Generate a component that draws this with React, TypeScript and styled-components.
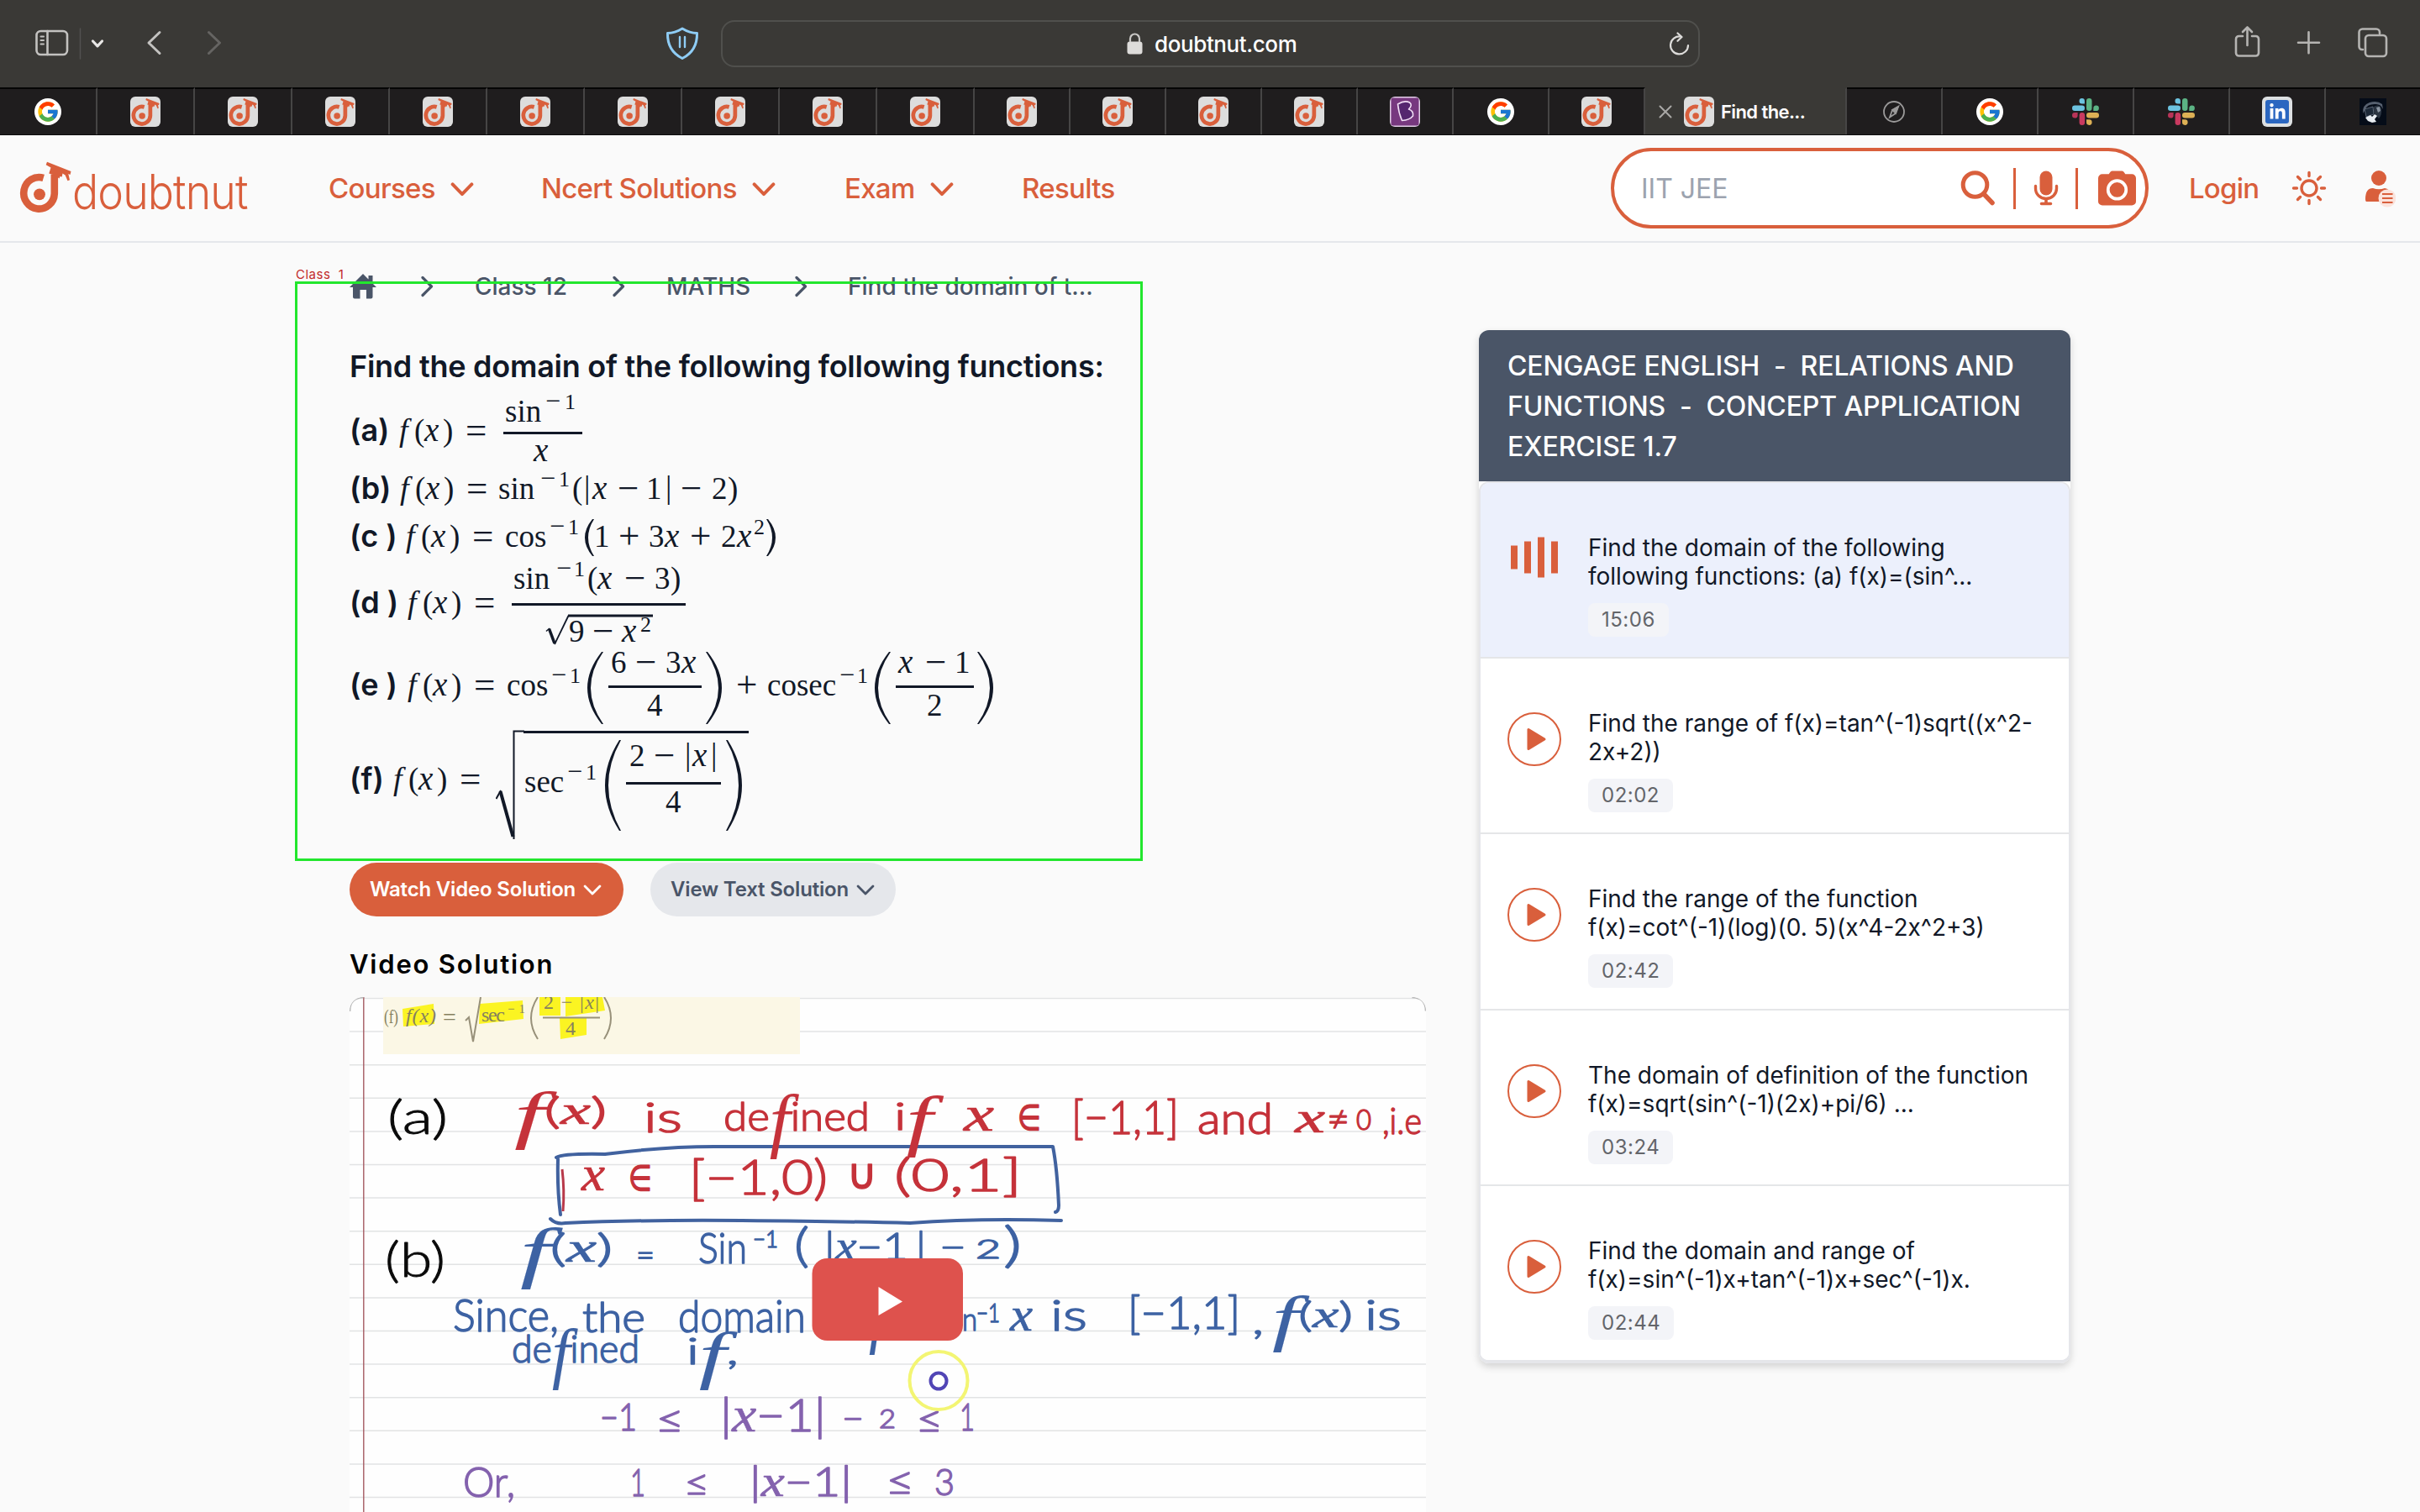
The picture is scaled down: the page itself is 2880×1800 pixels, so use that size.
import React from "react";
import styled, { createGlobalStyle, css } from "styled-components";
import { FcGoogle } from "react-icons/fc";
import { FaLinkedinIn } from "react-icons/fa";

const ORANGE = "#d95f3c";
const INK = "#111827";
const SLATE = "#4a5568";

const GlobalStyle = createGlobalStyle`
  * { box-sizing: border-box; }
  body { margin: 0; background: #fafafa; overflow: hidden; }
  svg { display: block; flex: none; }
`;

const Page = styled.div`
  width: 2880px;
  height: 1800px;
  overflow: hidden;
  display: flex;
  flex-direction: column;
  background: #fafafa;
  color: ${INK};
  font-family: Inter, "Liberation Sans", sans-serif;
`;

/* ---------- browser chrome ---------- */

const Toolbar = styled.div`
  flex: none;
  height: 104px;
  display: flex;
  align-items: flex-start;
  background: #3a3936;
`;
const Controls = styled.div`
  width: 858px;
  height: 104px;
`;
const UrlBox = styled.div`
  width: 1165px;
  height: 56px;
  margin-top: 24px;
  padding: 0 10px 0 481px;
  border: 2px solid #50504d;
  border-radius: 16px;
  display: flex;
  align-items: center;
  color: #fff;
`;
const UrlText = styled.span`
  flex: 1;
  margin-left: 14px;
  padding-top: 1px;
  font-size: 26px;
  font-weight: 500;
  letter-spacing: -0.4px;
`;
const TabStrip = styled.div`
  flex: none;
  height: 57px;
  display: flex;
  background: #1f1d1e;
  border-bottom: 2px solid #0c0c0c;
`;
const Tab = styled.div<{ $w: number; $active?: boolean }>`
  width: ${(p) => p.$w}px;
  height: 56px;
  display: flex;
  align-items: center;
  justify-content: ${(p) => (p.$active ? "flex-start" : "center")};
  padding-left: ${(p) => (p.$active ? 16 : 0)}px;
  border-right: 2px solid #464545;
  border-top: 2px solid ${(p) => (p.$active ? "#3a3936" : "#050505")};
  background: ${(p) => (p.$active ? "#3a3936" : "#1f1d1e")};
  &:last-child { border-right: 0; }
`;
const TabTitle = styled.span`
  margin-left: 8px;
  color: #fff;
  font-size: 22px;
  font-weight: 600;
  letter-spacing: -0.6px;
`;
const Favicon = styled.div<{ $bg: string; $round?: boolean }>`
  width: ${(p) => (p.$round ? 32 : 36)}px;
  height: ${(p) => (p.$round ? 32 : 36)}px;
  border-radius: ${(p) => (p.$round ? "50%" : "6px")};
  background: ${(p) => p.$bg};
  display: flex;
  align-items: center;
  justify-content: center;
`;
const BlueTile = styled.div`
  width: 28px;
  height: 28px;
  border-radius: 3px;
  display: flex;
  align-items: center;
  justify-content: center;
  background: #2a66c0;
  color: #fff;
`;

const MarkShape = () => (
  <g>
    <path d="M51.700 211.800A18.300 18.800 0 1 0 64.800 230.500V207.500" fill="none" stroke={ORANGE} strokeWidth="8.600" />
    <circle cx="47" cy="231.300" r="6.900" fill={ORANGE} />
    <path
      d="M56 192.700 84.500 204 83.500 208 81.300 207 83 214.300 80.500 215.300 77.600 208.500 74.500 206.500 73.700 210.500 71.500 210 70.500 212.500 66 209 58.300 206.500 60.500 199.500 54.700 196.300Z"
      fill={ORANGE}
    />
  </g>
);

const DoubtnutIcon = () => (
  <Favicon $bg="#dddddd">
    <svg width="35" height="35" viewBox="23 191 64 64">
      <MarkShape />
    </svg>
  </Favicon>
);
const GoogleIcon = () => (
  <Favicon $bg="#fff" $round>
    <FcGoogle size={28} />
  </Favicon>
);
const ByjusIcon = () => (
  <Favicon $bg="#e3cfe8">
    <svg width="34" height="34" viewBox="0 0 34 34">
      <rect x="0.500" y="0.500" width="33" height="33" rx="2" fill="#77387f" />
      <path
        d="M8.500 8q8-5 14-2 4 3-1 8 6 2 5 8-4 5-13 5.500-4-9-5-19.500z"
        fill="#55266f"
        stroke="#f1dff5"
        strokeWidth="1.600"
        strokeLinejoin="round"
      />
    </svg>
  </Favicon>
);
const SlackIcon = () => (
  <svg width="32" height="32" viewBox="0 0 32 32">
    <path d="M11.700 0a3.200 3.200 0 0 1 3.200 3.200v3.200h-3.200a3.200 3.200 0 0 1 0-6.400z" fill="#6cc3e0" />
    <rect x="0" y="8.500" width="15" height="6.500" rx="3.200" fill="#6cc3e0" />
    <rect x="17" y="0" width="6.500" height="15" rx="3.200" fill="#5bb384" />
    <path d="M25.300 15V11.800a3.300 3.300 0 1 1 3.300 3.200z" fill="#5bb384" />
    <rect x="17" y="17" width="15" height="6.500" rx="3.200" fill="#ddb055" />
    <path d="M17 25.300h3.200a3.300 3.300 0 1 1-3.200 3.300z" fill="#ddb055" />
    <rect x="8.600" y="17" width="6.500" height="15" rx="3.200" fill="#c93a60" />
    <path d="M6.600 17v3.200a3.300 3.300 0 1 1-3.300-3.200z" fill="#b93458" />
  </svg>
);
const CompassIcon = () => (
  <svg width="26" height="26" viewBox="0 0 26 26" fill="none" stroke="#9b9a9a" strokeWidth="1.800">
    <circle cx="13" cy="13" r="12" />
    <path d="M18 7 15 15l-7 4.500L11 11z" />
    <path d="M18 7 15 15l-4-4z" fill="#9b9a9a" />
  </svg>
);
const LinkedInIcon = () => (
  <Favicon $bg="#dde0e2">
    <BlueTile>
      <FaLinkedinIn size={21} />
    </BlueTile>
  </Favicon>
);
const DarkPictureIcon = () => (
  <svg width="32" height="32" viewBox="0 0 32 32">
    <rect width="32" height="32" fill="#050c18" />
    <path d="M4 18Q3 8 12 5q9-3 15 2l1 6q-3-7-10-6-9 0-11 6z" fill="#56606f" />
    <path d="M6 13l10-3 1 9-9 3z" fill="#1d2938" stroke="#6b7685" strokeWidth="0.800" />
    <path d="M17 10q6-4 9 2 1 8-3 12l-3-3-3-4z" fill="#2a3441" />
    <path d="M20 11l4-1 1 5-3 2z" fill="#8c96a2" />
    <path d="M7 23l6-3 2 2 3-3 3 2-3 4 2 3-5 1-5-2z" fill="#e8edf2" />
  </svg>
);

type TabDef = [number, React.ReactNode];
const repeat = (n: number, w: number): TabDef[] => Array.from({ length: n }, () => [w, <DoubtnutIcon />]);
const tabs: TabDef[] = [
  [116, <GoogleIcon />],
  ...repeat(9, 116),
  ...repeat(4, 114),
  [114, <ByjusIcon />],
  [114, <GoogleIcon />],
  [114, <DoubtnutIcon />],
];
const tabsAfter: TabDef[] = [
  [114, <CompassIcon />],
  [114, <GoogleIcon />],
  [114, <SlackIcon />],
  [114, <SlackIcon />],
  [114, <LinkedInIcon />],
  [112, <DarkPictureIcon />],
];

const Browser = () => (
  <>
    <Toolbar>
      <Controls>
        <svg width="858" height="104" viewBox="0 0 858 104" fill="none" strokeLinecap="round" strokeLinejoin="round">
          <g stroke="#c3c2c0" strokeWidth="2.600">
            <rect x="43.500" y="37" width="36.500" height="28" rx="5" />
            <path d="M56.500 37v28" />
            <path d="M48.500 43.500h3.500M48.500 48h3.500M48.500 52.500h3.500" strokeWidth="2" />
            <path d="M190 38.500 177 51l13 12.500" strokeWidth="3" />
          </g>
          <path d="M95.500 34v36" stroke="#525150" strokeWidth="1.500" />
          <path d="m110.500 49 5.500 5.800 5.500-5.800" stroke="#e8e7e6" strokeWidth="3.200" />
          <path d="M248.500 38.500 261.500 51l-13 12.500" stroke="#656462" strokeWidth="3" />
          <path
            d="M812 34q9 5.500 17.500 5.500.500 21-17.500 30-18-9-17.500-30 8.500 0 17.500-5.500z"
            stroke="#8fcdf5"
            strokeWidth="3"
          />
          <path d="M809 44v12M815 44v12" stroke="#8fcdf5" strokeWidth="2.400" />
        </svg>
      </Controls>
      <UrlBox>
        <svg width="19" height="26" viewBox="0 0 19 26">
          <rect x="0.500" y="10.500" width="18" height="15" rx="3" fill="#dddcda" />
          <path d="M4 11V7a5.500 5.500 0 0 1 11 0v4" fill="none" stroke="#c9c8c6" strokeWidth="2.200" />
        </svg>
        <UrlText>doubtnut.com</UrlText>
        <svg width="25" height="28" viewBox="0 0 25 28" fill="none" stroke="#dddcda" strokeWidth="2.200" strokeLinecap="round" strokeLinejoin="round">
          <path d="M14 5.500A10.500 10.500 0 1 0 23 16" />
          <path d="M10.500 1.500 15.500 6l-5 4.800" />
        </svg>
      </UrlBox>
      <svg width="857" height="104" viewBox="2023 0 857 104" fill="none" stroke="#b5b4b2" strokeWidth="2.600" strokeLinecap="round" strokeLinejoin="round">
        <path d="M2669 43h-4.500a3.500 3.500 0 0 0-3.500 3.500V63a3.500 3.500 0 0 0 3.500 3.500h20a3.500 3.500 0 0 0 3.500-3.500V46.500a3.500 3.500 0 0 0-3.500-3.500H2680M2674.500 54V32.500M2669 38l5.500-5.500 5.500 5.500" />
        <path d="M2735 50.700h25M2747.500 38.200v25" />
        <path d="M2812 59h-1a3.500 3.500 0 0 1-3.500-3.500v-17a4 4 0 0 1 4-4h16.500a4 4 0 0 1 4 4v1.500" />
        <rect x="2815" y="42" width="25" height="25" rx="4" />
      </svg>
    </Toolbar>
    <TabStrip>
      {tabs.map(([w, icon], i) => (
        <Tab key={i} $w={w}>{icon}</Tab>
      ))}
      <Tab $w={240} $active>
        <svg width="16" height="16" viewBox="0 0 16 16" stroke="#a9a8a6" strokeWidth="2" strokeLinecap="round" style={{ marginRight: 14 }}>
          <path d="M1.500 1.500l13 13M14.500 1.500l-13 13" />
        </svg>
        <DoubtnutIcon />
        <TabTitle>Find the...</TabTitle>
      </Tab>
      {tabsAfter.map(([w, icon], i) => (
        <Tab key={i} $w={w}>{icon}</Tab>
      ))}
    </TabStrip>
  </>
);

/* ---------- site header ---------- */

const Header = styled.header`
  flex: none;
  height: 128px;
  display: flex;
  align-items: center;
  border-bottom: 2px solid #e5e7eb;
  color: ${ORANGE};
`;
const Logo = styled.div`
  width: 391px;
  height: 126px;
  display: flex;
  padding-left: 22px;
`;
const LogoText = styled.span`
  margin: 33px 0 0 -2px;
  height: 60px;
  line-height: 69px;
  font-size: 57px;
  font-weight: 300;
  letter-spacing: -1px;
  transform: scaleX(0.91);
  transform-origin: 0 0;
`;
const NavItem = styled.div<{ $w: number }>`
  width: ${(p) => p.$w}px;
  display: flex;
  align-items: center;
  gap: 18px;
  font-size: 33px;
  font-weight: 500;
  letter-spacing: -0.7px;
  white-space: nowrap;
`;
const SearchBox = styled.div`
  width: 640px;
  height: 96px;
  border: 4px solid ${ORANGE};
  border-radius: 48px;
  background: #fff;
  display: flex;
  align-items: center;
  padding-left: 32px;
`;
const Placeholder = styled.span`
  width: 380px;
  color: #9ca3af;
  font-size: 32px;
`;
const Divider = styled.span<{ $l: number; $r: number }>`
  width: 3px;
  height: 49px;
  margin: 0 ${(p) => p.$r}px 0 ${(p) => p.$l}px;
  background: ${ORANGE};
`;
const Login = styled.span`
  width: 122px;
  margin-left: 48px;
  font-size: 33px;
  font-weight: 500;
  letter-spacing: -0.8px;
`;

const Chevron = ({ w = 28, sw = 4 }: { w?: number; sw?: number }) => (
  <svg width={w} height={w * 0.6} viewBox="0 0 28 17" fill="none" stroke="currentColor" strokeWidth={sw} strokeLinecap="round" strokeLinejoin="round" style={{ marginTop: 3 }}>
    <path d="M2.500 2.500 14 14.200 25.500 2.500" />
  </svg>
);

const SiteHeader = () => (
  <Header>
    <Logo>
      <svg width="66" height="126" viewBox="22 161 66 126">
        <MarkShape />
      </svg>
      <LogoText>doubtnut</LogoText>
    </Logo>
    <NavItem $w={253}>Courses <Chevron /></NavItem>
    <NavItem $w={361}>Ncert Solutions <Chevron /></NavItem>
    <NavItem $w={211}>Exam <Chevron /></NavItem>
    <NavItem $w={701}>Results</NavItem>
    <SearchBox>
      <Placeholder>IIT JEE</Placeholder>
      <svg width="42" height="42" viewBox="0 0 42 42" fill="none" stroke={ORANGE} strokeWidth="5" strokeLinecap="round">
        <circle cx="17.500" cy="17" r="14.300" />
        <path d="m28 28 10 10.500" strokeWidth="5.500" />
      </svg>
      <Divider $l={21} $r={21} />
      <svg width="30" height="42" viewBox="0 0 30 42" fill="none" stroke={ORANGE} strokeLinecap="round">
        <rect x="7.500" y="0.500" width="15" height="29" rx="7.500" fill={ORANGE} stroke="none" />
        <path d="M2.500 18.500v3a12.500 12 0 0 0 25 0v-3" strokeWidth="3.400" />
        <path d="M15 34v5M9.500 39.500h11" strokeWidth="3.600" />
      </svg>
      <Divider $l={20} $r={24} />
      <svg width="45" height="42" viewBox="0 0 46 42">
        <path d="M5 4h8q2-4 4-4h12q2 0 4 4h8a5 5 0 0 1 5 5v28a5 5 0 0 1-5 5H5a5 5 0 0 1-5-5V9a5 5 0 0 1 5-5z" fill={ORANGE} />
        <circle cx="23" cy="23" r="11" fill={ORANGE} stroke="#fff" strokeWidth="3.800" />
      </svg>
    </SearchBox>
    <Login>Login</Login>
    <svg width="42" height="42" viewBox="0 0 42 42" fill="none" stroke={ORANGE} strokeWidth="3.400" strokeLinecap="round">
      <circle cx="21" cy="21" r="9" />
      <path d="M21 2.500v4M21 35.500v4M2.500 21h4M35.500 21h4M7.500 7.500l3 3M31.500 31.500l3 3M7.500 34.500l3-3M31.500 10.500l3-3" />
    </svg>
    <svg width="36" height="46" viewBox="0 0 36 46" style={{ marginLeft: 46, marginTop: 2 }}>
      <circle cx="16" cy="10" r="9" fill={ORANGE} />
      <path d="M1 38q-1 0-1-3 0-13 9-13 7 2.500 14 0 6 1 7 7v9z" fill={ORANGE} />
      <circle cx="26" cy="34" r="10.500" fill="#fbe3dc" />
      <path d="M20 29h12.500M20 34h12.500M20 39h12.500" stroke={ORANGE} strokeWidth="2" />
    </svg>
  </Header>
);

/* ---------- main column ---------- */

const Main = styled.main`
  flex: 1;
  display: flex;
  align-items: flex-start;
  padding-left: 416px;
`;
const Column = styled.section`
  position: relative;
  width: 1281px;
  height: 1511px;
  margin-right: 63px;
`;
const Crumbs = styled.nav`
  height: 115px;
  padding-top: 32px;
  display: flex;
  align-items: flex-start;
  color: ${SLATE};
  font-size: 28px;
  font-weight: 500;
  line-height: 40px;
  white-space: nowrap;
`;
const Crumb = styled.span<{ $w: number }>`
  width: ${(p) => p.$w}px;
`;
const CrumbIcon = styled.span<{ $w: number }>`
  width: ${(p) => p.$w}px;
  height: 40px;
  display: flex;
  align-items: center;
`;
const Annotation = styled.div`
  position: absolute;
  left: -65px;
  top: 46px;
  width: 1009px;
  height: 690px;
  border: 3px solid #22e62d;
`;
const AnnotationLabel = styled.span`
  position: absolute;
  left: -64px;
  top: 28px;
  color: #c22a2a;
  font-size: 15px;
  line-height: 20px;
  letter-spacing: 0.5px;
  white-space: pre;
`;
const Question = styled.h1`
  margin: 0;
  height: 60px;
  line-height: 64px;
  font-size: 36px;
  font-weight: 600;
  letter-spacing: -0.25px;
  white-space: nowrap;
`;
const Row = styled.div<{ $h: number }>`
  display: flex;
  align-items: flex-start;
  height: ${(p) => p.$h}px;
`;

type Kind = "h" | "f" | "i" | "r" | "o" | "s" | "so" | "bar";
const kinds: Record<Kind, ReturnType<typeof css>> = {
  h: css`font: 600 36px/44px Inter, sans-serif;`,
  f: css`font: italic 38px/42px "Liberation Serif", serif;`,
  i: css`font: italic 39px/42px "Liberation Serif", serif;`,
  r: css`font: 37px/42px "Liberation Serif", serif;`,
  o: css`font: 45px/50px "Liberation Serif", serif;`,
  s: css`font: 26px/28px "Liberation Serif", serif;`,
  so: css`font: 32px/36px "Liberation Serif", serif;`,
  bar: css`font: 37px/42px "Liberation Serif", serif;`,
};
const ascent: Record<Kind, number> = { h: 35, f: 34, i: 34, r: 33, o: 38, s: 37, so: 43, bar: 34 };

const Tok = styled.span<{ $k: Kind; $w: number; $b: number }>`
  ${(p) => kinds[p.$k]}
  flex: none;
  width: ${(p) => p.$w}px;
  margin-top: ${(p) => p.$b - ascent[p.$k]}px;
  white-space: pre;
`;
const FracBox = styled.div<{ $w: number }>`
  flex: none;
  width: ${(p) => p.$w}px;
  display: flex;
  flex-direction: column;
`;
const FracBar = styled.div`
  height: 3px;
  background: ${INK};
`;
const Part = styled.div<{ $h: number; $l: number }>`
  display: flex;
  align-items: flex-start;
  flex: none;
  height: ${(p) => p.$h}px;
  padding-left: ${(p) => p.$l}px;
`;

type T = [Kind, string, number];
const Line = ({ b, t }: { b: number; t: T[] }) => (
  <>
    {t.map(([k, s, w], i) => (
      <Tok key={i} $k={k} $w={w} $b={b}>{s}</Tok>
    ))}
  </>
);
const fx = (label: string, w: number, eq: number): T[] => [
  ["h", label, w],
  ["f", "f", 18],
  ["r", "(", 12],
  ["i", "x", 22],
  ["r", ")", 27],
  ["o", "=", eq],
];
type FracProps = { w: number; num: T[]; den: React.ReactNode; nh: number; nb: number; nl: number; dh: number; dl: number };
const Frac = (p: FracProps) => (
  <FracBox $w={p.w}>
    <Part $h={p.nh} $l={p.nl}><Line b={p.nb} t={p.num} /></Part>
    <FracBar />
    <Part $h={p.dh} $l={p.dl}>{p.den}</Part>
  </FracBox>
);

const Delim = ({ w, h, top, x, span, right }: { w: number; h: number; top: number; x: number; span: number; right?: boolean }) => (
  <svg width={w} height={h} viewBox={`0 0 ${w} ${h}`} fill={INK} style={{ marginTop: top }}>
    <path
      d={
        right
          ? `M${x} 0Q${x + span * 2 - 6} ${h / 2} ${x} ${h}h2Q${x + span * 2} ${h / 2} ${x + 2} 0z`
          : `M${x + span} 0Q${x - span + 6} ${h / 2} ${x + span} ${h}h-2Q${x - span} ${h / 2} ${x + span - 2} 0z`
      }
    />
  </svg>
);

const Formulas = () => (
  <>
    <Row $h={94}>
      <Line b={61} t={fx("(a)", 59, 45)} />
      <Frac
        w={94} nh={50} nb={38} nl={2} dh={41} dl={36}
        num={[["r", "sin", 48], ["so", "−", 23], ["s", "1", 13]]}
        den={<Line b={32} t={[["i", "x", 20]]} />}
      />
    </Row>
    <Row $h={56}>
      <Line
        b={36}
        t={[
          ...fx("(b)", 60, 38), ["r", "sin", 50], ["so", "−", 22], ["s", "1", 16], ["r", "(", 14], ["bar", "|", 10],
          ["i", "x", 30], ["o", "−", 34], ["r", "1", 23], ["bar", "|", 18], ["o", "−", 37], ["r", "2", 19], ["r", ")", 14],
        ]}
      />
    </Row>
    <Row $h={56}>
      <Line b={37} t={[...fx("(c )", 67, 39), ["r", "cos", 53], ["so", "−", 22], ["s", "1", 20]]} />
      <Delim w={11} h={44} top={4} x={1} span={10} />
      <Line b={37} t={[["r", "1", 29], ["o", "+", 36], ["r", "3", 19], ["i", "x", 30], ["o", "+", 37], ["r", "2", 19], ["i", "x", 20], ["s", "2", 13]]} />
      <Delim w={14} h={44} top={4} x={2} span={10} right />
    </Row>
    <Row $h={104}>
      <Line b={60} t={fx("(d )", 69, 45)} />
      <Frac
        w={207} nh={48} nb={31} nl={2} dh={50} dl={40}
        num={[["r", "sin", 51], ["so", "−", 21], ["s", "1", 16], ["r", "(", 12], ["i", "x", 32], ["o", "−", 36], ["r", "3", 19], ["r", ")", 12]]}
        den={
          <>
            <svg width="128" height="40" viewBox="0 0 128 40" fill="none" stroke={INK} style={{ marginTop: 9, marginRight: -100 }}>
              <path d="M1 21.500 5 18" strokeWidth="1.500" />
              <path d="M4.500 18.500 11 36" strokeWidth="3.500" />
              <path d="M11 37 27.500 3" strokeWidth="1.800" />
              <path d="M27 3h101" strokeWidth="3" />
            </svg>
            <Line b={43} t={[["r", "9", 28], ["o", "−", 35], ["i", "x", 22]]} />
            <Line b={46} t={[["s", "2", 15]]} />
          </>
        }
      />
    </Row>
    <Row $h={92}>
      <Line b={54} t={[...fx("(e )", 69, 39), ["r", "cos", 53], ["so", "−", 22], ["s", "1", 19]]} />
      <Delim w={27} h={86} top={2} x={3} span={18} />
      <Frac
        w={111} nh={42} nb={27} nl={3} dh={47} dl={46}
        num={[["r", "6", 29], ["o", "−", 36], ["r", "3", 19], ["i", "x", 20]]}
        den={<Line b={33} t={[["r", "4", 20]]} />}
      />
      <Delim w={41} h={86} top={2} x={5} span={18} right />
      <Line b={54} t={[["o", "+", 37], ["r", "cosec", 86], ["so", "−", 21], ["s", "1", 18]]} />
      <Delim w={28} h={86} top={2} x={4} span={18} />
      <Frac
        w={93} nh={42} nb={27} nl={3} dh={47} dl={37}
        num={[["i", "x", 32], ["o", "−", 35], ["r", "1", 20]]}
        den={<Line b={33} t={[["r", "2", 20]]} />}
      />
      <Delim w={30} h={86} top={2} x={4} span={18} right />
    </Row>
    <Row $h={161}>
      <Line b={74} t={fx("(f)", 52, 43)} />
      <svg width="301" height="134" viewBox="0 0 301 134" fill="none" stroke={INK} style={{ marginRight: -267 }}>
        <path d="M.500 85 6 75" strokeWidth="2" />
        <path d="M5.500 76 20.500 130" strokeWidth="4" />
        <path d="M21.500 133V4.500H34" strokeWidth="2" />
        <path d="M33 5.500h268" strokeWidth="3" />
      </svg>
      <Line b={77} t={[["r", "sec", 51], ["so", "−", 22], ["s", "1", 21]]} />
      <Delim w={27} h={108} top={15} x={3} span={18} />
      <Frac
        w={113} nh={65} nb={46} nl={4} dh={60} dl={47}
        num={[["r", "2", 29], ["o", "−", 37], ["bar", "|", 9], ["i", "x", 22], ["bar", "|", 9]]}
        den={<Line b={33} t={[["r", "4", 20]]} />}
      />
      <Delim w={30} h={108} top={15} x={6} span={18} right />
    </Row>
  </>
);

const Buttons = styled.div`
  display: flex;
  gap: 32px;
  height: 64px;
`;
const Pill = styled.button<{ $w: number; $primary?: boolean }>`
  width: ${(p) => p.$w}px;
  height: 64px;
  padding: 0 0 2px 24px;
  border: 0;
  border-radius: 32px;
  display: flex;
  align-items: center;
  gap: 9px;
  background: ${(p) => (p.$primary ? ORANGE : "#e5e7eb")};
  color: ${(p) => (p.$primary ? "#fff" : SLATE)};
  font: 600 24px Inter, sans-serif;
  letter-spacing: -0.18px;
  white-space: nowrap;
`;
const SectionTitle = styled.h2`
  margin: 32px 0 0;
  height: 64px;
  line-height: 50px;
  font-size: 31px;
  font-weight: 600;
  letter-spacing: 1.8px;
  color: #000;
`;
const Video = styled.div`
  height: 613px;
  overflow: hidden;
  border-radius: 16px 16px 0 0;
  background: #fff;
`;

/* Board notes: x, baseline, width, size, text. The letters f and x are drawn in a cursive face. */
type Note = [number, number, number, number, string];
const Cursive = styled.tspan`
  font-family: "Liberation Serif", serif;
  font-style: italic;
`;
const NoteText = styled.text`
  font-family: Lato, sans-serif;
  font-weight: 300;
`;
const NoteLayer = ({ color, notes, pen = 1.5 }: { color: string; notes: Note[]; pen?: number }) => (
  <g fill={color} stroke={color} strokeWidth={pen} strokeLinejoin="round" strokeLinecap="round">
    {notes.map(([x, y, w, size, s], i) => {
      let drop = 0;
      return (
        <NoteText key={i} x={x} y={y} textLength={w} lengthAdjust="spacingAndGlyphs" fontSize={size}>
          {s.split(/([fx])/).filter(Boolean).map((part, j) => {
            const isF = part === "f";
            const dy = (isF ? size * 0.34 : 0) - drop;
            drop = isF ? size * 0.34 : 0;
            if (part === "f" || part === "x") {
              return (
                <Cursive key={j} dy={dy} fontSize={isF ? size * 1.75 : size * 1.1} strokeWidth={isF ? 0.1 : 0.7}>
                  {part}
                </Cursive>
              );
            }
            return <tspan key={j} dy={dy}>{part}</tspan>;
          })}
        </NoteText>
      );
    })}
  </g>
);

const black: Note[] = [[461, 1350, 72, 56, "(a)"], [458, 1520, 72, 58, "(b)"]];
const red: Note[] = [
  [612, 1338, 110, 44, "f(x)"], [766, 1348, 46, 50, "is"], [861, 1346, 174, 48, "defined"],
  [1064, 1345, 46, 46, "if"], [1147, 1346, 36, 54, "x"], [1211, 1345, 28, 42, "∈"],
  [1275, 1350, 128, 56, "[−1,1]"], [1425, 1350, 90, 52, "and"], [1541, 1348, 36, 48, "x"], [1579, 1348, 27, 46, "≠"],
  [1614, 1345, 18, 34, "0"], [1645, 1350, 47, 44, ",i.e"],
  [692, 1417, 28, 54, "x"], [748, 1417, 28, 42, "∈"], [820, 1422, 165, 58, "[−1,0)"],
  [1008, 1415, 36, 50, "∪"], [1064, 1418, 152, 54, "(0,1]"],
];
const blue: Note[] = [
  [619, 1502, 110, 46, "f(x)"], [757, 1508, 22, 40, "="], [831, 1504, 58, 52, "Sin"], [896, 1485, 30, 28, "−1"],
  [945, 1502, 18, 56, "("], [981, 1500, 100, 46, "|x−1"], [1090, 1502, 12, 48, "|"],
  [1118, 1500, 32, 44, "−"], [1161, 1498, 30, 32, "2"], [1194, 1502, 22, 58, ")"],
  [539, 1585, 126, 54, "Since,"], [693, 1586, 75, 50, "the"], [807, 1586, 152, 54, "domain"], [1034, 1580, 20, 46, "f"],
  [1145, 1584, 18, 38, "n"], [1162, 1574, 28, 32, "−1"], [1202, 1584, 27, 52, "x"], [1250, 1584, 44, 52, "is"],
  [1342, 1582, 134, 54, "[−1,1]"], [1490, 1588, 14, 46, ","], [1514, 1580, 96, 42, "f(x)"],
  [1624, 1583, 44, 50, "is"],
  [609, 1622, 152, 46, "defined"], [817, 1624, 62, 44, "if,"],
];
const purple: Note[] = [
  [714, 1703, 44, 46, "−1"], [780, 1706, 34, 48, "≤"], [857, 1704, 126, 54, "|x−1|"], [1002, 1704, 26, 44, "−"],
  [1046, 1700, 20, 32, "2"], [1090, 1706, 32, 48, "≤"], [1142, 1703, 18, 46, "1"],
  [551, 1782, 62, 50, "Or,"], [750, 1781, 18, 46, "1"], [814, 1781, 30, 46, "≤"], [892, 1781, 122, 48, "|x−1|"],
  [1054, 1780, 34, 50, "≤"], [1112, 1780, 24, 44, "3"],
];

const VideoBoard = () => (
  <Video>
    <svg width="1281" height="613" viewBox="416 1187 1281 613">
      <rect x="416" y="1187" width="1281" height="613" fill="#fefefe" />
      {Array.from({ length: 16 }, (_, i) => (
        <path key={i} d={`M416 ${1188.5 + i * 39.6}H1697`} stroke="#e2e3e4" strokeWidth="1.500" />
      ))}
      <path d="M432.800 1187v613" stroke="#a55a62" strokeWidth="1.400" />
      <path d="M416.500 1204q0-16 16-16.500M1680.500 1187.500q16 .5 16 16" fill="none" stroke="#b5b5b5" strokeWidth="1.500" />
      <rect x="456" y="1187" width="496" height="68" fill="#fbf7e5" />
      <g fill="#fbf422">
        <path d="M479 1201l37-6 1 24-37 3z" />
        <path d="M571 1195l51-4 1 22-53 6z" />
        <path d="M642 1187h25v22h-25zM673 1187h44l3 16-47 7zM666 1212h32v20l-31 5z" />
      </g>
      <g fill="#85805f" fontFamily='"Liberation Serif", serif' fontSize="24">
        <text x="457" y="1218" textLength="17" lengthAdjust="spacingAndGlyphs">(f)</text>
        <text x="483" y="1217" textLength="36" fontStyle="italic">f(x)</text>
        <text x="527" y="1220" textLength="19" fontSize="28">=</text>
        <text x="573" y="1216" textLength="28">sec</text>
        <text x="604" y="1206" textLength="21" fontSize="15">−1</text>
        <text x="647" y="1201" textLength="66">2 − |<tspan fontStyle="italic">x</tspan>|</text>
        <text x="673" y="1232">4</text>
      </g>
      <g fill="none" stroke="#98917a" strokeWidth="2">
        <path d="M554 1215l4-4 5 29 9-53M646 1211.500h68M640 1187q-16 25 0 50M719 1187q16 25 0 50" />
      </g>
      <g fill="none" stroke="#41629f" strokeWidth="4" strokeLinecap="round" strokeLinejoin="round">
        <path d="M664 1380q-1 35 3 66M662 1378q8-5 58-4 70-9 130-9h403q5 25 7 70 0 7-4 8" />
        <path d="M655 1451q7 7 18 5 90-4 210-3t200 3q80-6 180-3" />
      </g>
      <path d="M669 1392q3 25 1 50" stroke="#b8394a" strokeWidth="3" fill="none" />
      <NoteLayer color="#0a0a0a" notes={black} pen={0.9} />
      <NoteLayer color="#c5323a" notes={red} />
      <NoteLayer color="#3d62a3" notes={blue} />
      <NoteLayer color="#8462ae" notes={purple} />
      <circle cx="1117" cy="1643.500" r="34.500" fill="none" stroke="#f3f573" strokeWidth="4" />
      <circle cx="1117" cy="1644" r="9.500" fill="none" stroke="#5145b5" strokeWidth="4" />
      <rect x="966.500" y="1498" width="179.500" height="98" rx="18" fill="#de524d" />
      <path d="M1045.500 1532v34l28.500-16.500z" fill="#fff" />
    </svg>
  </Video>
);

/* ---------- playlist ---------- */

const Playlist = styled.aside`
  width: 704px;
  height: 1230px;
  margin-top: 104px;
  border-radius: 12px;
  background: #fff;
  box-shadow: 0 4px 10px rgba(0, 0, 0, 0.16);
`;
const PlaylistHead = styled.div`
  height: 180px;
  padding: 19px 36px 0 34px;
  border-radius: 12px 12px 0 0;
  background: #4a5567;
  color: #fff;
  font-size: 32px;
  font-weight: 500;
  line-height: 48px;
  letter-spacing: -0.12px;
  white-space: pre;
`;
const List = styled.div`
  border: 2px solid #e5e6ea;
  border-bottom-width: 4px;
  border-radius: 12px;
  overflow: hidden;
`;
const Item = styled.div<{ $active?: boolean }>`
  height: 209.2px;
  display: flex;
  padding: 60px 0 0 32px;
  border-bottom: 2px solid #e5e6e8;
  background: ${(p) => (p.$active ? "#ecf0fc" : "#fff")};
  &:last-child { border-bottom: 0; height: 207px; }
`;
const ItemBody = styled.div`
  margin-left: 32px;
  display: flex;
  flex-direction: column;
  align-items: flex-start;
  font-size: 28px;
  line-height: 34px;
  white-space: pre;
`;
const Duration = styled.span`
  height: 40px;
  margin-top: 15px;
  padding: 0 16px;
  border-radius: 8px;
  background: #f3f4f8;
  color: #63656a;
  font-size: 24px;
  line-height: 40px;
  letter-spacing: 0.5px;
`;
const BarsIcon = () => (
  <svg width="64" height="64" viewBox="0 0 64 64" fill={ORANGE} style={{ marginTop: -3 }}>
    <path d="M4 17.500h8v28H4zM20 12.500h8v38h-8zM36 7.500h8v48h-8zM52 12.500h8v38h-8z" />
  </svg>
);
const PlayIcon = () => (
  <svg width="64" height="64" viewBox="0 0 64 64" style={{ marginTop: 4 }}>
    <circle cx="32" cy="32" r="31" fill="#fff" stroke={ORANGE} strokeWidth="2" />
    <path d="M25 20.500v23l19-11.500z" fill={ORANGE} stroke={ORANGE} strokeWidth="3" strokeLinejoin="round" />
  </svg>
);
const items = [
  ["Find the domain of the following\nfollowing functions: (a) f(x)=(sin^...", "15:06"],
  ["Find the range of f(x)=tan^(-1)sqrt((x^2-\n2x+2))", "02:02"],
  ["Find the range of the function\nf(x)=cot^(-1)(log)(0. 5)(x^4-2x^2+3)", "02:42"],
  ["The domain of definition of the function\nf(x)=sqrt(sin^(-1)(2x)+pi/6) ...", "03:24"],
  ["Find the domain and range of\nf(x)=sin^(-1)x+tan^(-1)x+sec^(-1)x.", "02:44"],
];

const CrumbChevron = ({ w }: { w: number }) => (
  <CrumbIcon $w={w}>
    <svg width="15" height="26" viewBox="0 0 15 26" fill="none" stroke={SLATE} strokeWidth="3.200" strokeLinecap="round" strokeLinejoin="round">
      <path d="M2 2.500 12.500 13 2 23.500" />
    </svg>
  </CrumbIcon>
);

export default function App() {
  return (
    <Page>
      <GlobalStyle />
      <Browser />
      <SiteHeader />
      <Main>
        <Column>
          <Crumbs>
            <CrumbIcon $w={85}>
              <svg width="32" height="30" viewBox="0 0 32 30" fill={SLATE}>
                <path d="M16 0 22.500 6.500V2h5v9.500L32 16h-4.500v11.500A2 2 0 0 1 25.500 29.500H20V19h-7.500v10.500H6a2 2 0 0 1-2-2V16H0z" />
              </svg>
            </CrumbIcon>
            <CrumbChevron w={64} />
            <Crumb $w={164}>Class 12</Crumb>
            <CrumbChevron w={64} />
            <Crumb $w={153}>MATHS</Crumb>
            <CrumbChevron w={63} />
            <Crumb $w={300}>Find the domain of t...</Crumb>
          </Crumbs>
          <Question>Find the domain of the following following functions:</Question>
          <Formulas />
          <Buttons>
            <Pill $w={326} $primary>Watch Video Solution <Chevron w={22} sw={3.6} /></Pill>
            <Pill $w={292}>View Text Solution <Chevron w={22} sw={3.6} /></Pill>
          </Buttons>
          <SectionTitle>Video Solution</SectionTitle>
          <VideoBoard />
          <Annotation />
          <AnnotationLabel>Class  1</AnnotationLabel>
        </Column>
        <Playlist>
          <PlaylistHead>{"CENGAGE ENGLISH  -  RELATIONS AND\nFUNCTIONS  -  CONCEPT APPLICATION\nEXERCISE 1.7"}</PlaylistHead>
          <List>
            {items.map(([title, time], i) => (
              <Item key={i} $active={i === 0}>
                {i === 0 ? <BarsIcon /> : <PlayIcon />}
                <ItemBody>
                  {title}
                  <Duration>{time}</Duration>
                </ItemBody>
              </Item>
            ))}
          </List>
        </Playlist>
      </Main>
    </Page>
  );
}
